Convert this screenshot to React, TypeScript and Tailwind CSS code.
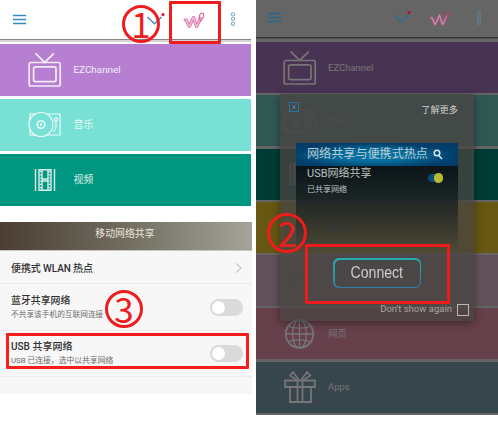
import type { ReactNode } from 'react';

const sans = "font-['Roboto','Noto_Sans_CJK_SC',sans-serif]";

function TvIcon() {
  return (
    <svg width="34" height="36" viewBox="0 0 34 36" fill="none" stroke="currentColor" strokeWidth="1.7" strokeLinejoin="round">
      <rect x="1.2" y="10.5" width="31" height="23.5" rx="1.8" />
      <rect x="5.6" y="14.8" width="22.4" height="14.8" rx="1.8" />
      <path d="M7.5 1.3l9.2 9 9.2-9" />
    </svg>
  );
}

function TurntableIcon() {
  return (
    <svg width="34" height="28" viewBox="0 0 34 28" fill="none" stroke="currentColor" strokeWidth="1.2">
      <path d="M8 3H2v6M2 18v6h6M18 3h14v21H18" />
      <circle cx="13" cy="13.5" r="12" />
      <circle cx="13" cy="13.5" r="3.8" strokeWidth="1.5" />
      <circle cx="13" cy="13.5" r=".6" />
      <path d="M28 10v6.5l-2.5 4.5" />
      <circle cx="28" cy="8.4" r="1.6" />
    </svg>
  );
}

function FilmIcon() {
  return (
    <svg width="22" height="24" viewBox="0 0 22 24" fill="none" stroke="currentColor" strokeWidth="1.4">
      <path d="M1.5 1v22M20.5 1v22M5 1.7h12v20.6H5zM8 2v20M14 2v20M8 11h6M8 13h6" />
      <path d="M6.5 3v18M15.5 3v18" strokeDasharray="1.2 2" />
    </svg>
  );
}

function UsbIcon() {
  return (
    <svg width="32" height="32" viewBox="0 0 32 32" fill="none" stroke="currentColor" strokeWidth="1.2">
      <path d="M22 1h9v9h-9zM20 10h11v21H2V15h18z" />
      <path d="M25 4v3M28 4v3M25 14v12" />
      <circle cx="14" cy="23" r="4" />
    </svg>
  );
}

function FolderIcon() {
  return (
    <svg width="26" height="18" viewBox="0 0 26 18" fill="none" stroke="currentColor">
      <path d="M1 2h20v14H1zM21 5h4v8h-4" />
    </svg>
  );
}

function GlobeIcon() {
  return (
    <svg width="30" height="30" viewBox="0 0 30 30" fill="none" stroke="currentColor" strokeWidth="1.3">
      <circle cx="14.5" cy="15" r="13.8" strokeWidth="1.8" />
      <ellipse cx="14.5" cy="15" rx="7" ry="14" />
      <path d="M14.5 1v28M.5 15h28M3.5 7c5 2.8 17 2.8 22 0M3.5 23c5-2.8 17-2.8 22 0" />
    </svg>
  );
}

function GiftIcon() {
  return (
    <svg width="32" height="32" viewBox="0 0 32 32" fill="none" stroke="currentColor" strokeWidth="1.8">
      <path d="M1.2 9.5h29.6v6.5H1.2zM6 16v15h21V16M13.5 9.5V31M18.5 9.5V31" />
      <path d="M15 9L9 1 6 4.5 13 9M17 9l6-8 3.5 3.5L19 9" strokeWidth="1.5" />
    </svg>
  );
}

function Menu() {
  return (
    <svg width="14" height="12" viewBox="0 0 14 12" stroke="#358bc0" strokeWidth="1.6">
      <path d="M0 1.5h13.2M0 5.5h13.2M0 9.5h13.2" />
    </svg>
  );
}

const squiggle = 'M2.2 9c2-.8 2.4 5 4 6.4C8 13.6 8.6 9 10.6 6.4c1.2 2.6 1.4 7.4 3 9C15.4 13.6 16 10 17.2 7.4';

function HeaderActions() {
  return (
    <div className="flex items-center">
      <svg width="20" height="16" viewBox="0 0 20 16" fill="none">
        <path d="M1.5 5l7 6.8 7-6.8" stroke="#3c91c5" strokeWidth="1.5" />
        <circle cx="17" cy="2.6" r="1.6" fill="#e8133d" />
      </svg>
      <svg className="ml-[17px]" width="23" height="18" viewBox="0 0 23 18" fill="none" strokeLinecap="round" strokeLinejoin="round">
        <path d={squiggle} stroke="#de72aa" strokeWidth="3.1" />
        <path d={squiggle} stroke="#f5cfe2" strokeWidth="1.1" />
        <path d="M16.4 8.4c-.8-3.4.6-6.4 2.8-6.4 2.1.3 2 3.8-.1 6l-2 2.6" stroke="#de5f9f" strokeWidth="1.2" />
      </svg>
      <svg className="ml-[24px]" width="6" height="15" viewBox="0 0 6 15" fill="none" stroke="#78aec9" strokeWidth="1.1">
        <circle cx="3" cy="2.4" r="1.6" />
        <circle cx="3" cy="7.1" r="1.6" />
        <circle cx="3" cy="11.8" r="1.6" />
      </svg>
    </div>
  );
}

function Row({ color, icon, label, size }: { color: string; icon: ReactNode; label?: string; size: string }) {
  return (
    <div className={`flex shrink-0 items-center ${size} ${color}`}>
      <div className="flex w-[34px] shrink-0 justify-center">{icon}</div>
      {label && <span className="ml-[11.5px] leading-none">{label}</span>}
    </div>
  );
}

function Toggle() {
  return (
    <div className="flex h-[17px] w-[33px] shrink-0 items-center rounded-full bg-[#dadada] px-[2px]">
      <div className="size-[13px] rounded-full bg-white" />
    </div>
  );
}

function Badge({ n, place }: { n: string; place: string }) {
  return (
    <div className={`absolute flex items-center justify-center rounded-full border-[3px] border-[#ee1c1c] font-['Noto_Sans_CJK_SC',sans-serif] text-[35px] text-[#ee1c1c] ${place}`}>
      <span className="-mt-[3px] leading-[32px]">{n}</span>
    </div>
  );
}

function LibraryScreen() {
  const size = 'h-[52px] pl-[28px] text-[9.9px] text-white/85';
  return (
    <section className="flex h-[207px] flex-col">
      <header className="flex h-[39px] shrink-0 items-center justify-between pl-[13px] pr-[15px]">
        <Menu />
        <HeaderActions />
      </header>
      <div className="mb-[2px] h-[3px] shrink-0 border-t border-[#858585] bg-[#d6d6d6]" />
      <div className="flex flex-col gap-[3px]">
        <Row size={size} color="bg-[#b67fd2]" icon={<TvIcon />} label="EZChannel" />
        <Row size={size} color="bg-[#78e0d4]" icon={<TurntableIcon />} label="音乐" />
        <Row size={size} color="bg-[#009680]" icon={<FilmIcon />} label="视频" />
      </div>
    </section>
  );
}

function TetheringScreen() {
  return (
    <section className="mt-[15px] h-[172px] w-[252px] bg-[#f7f7f7] text-[#303030]">
      <header className="flex h-[29px] items-center justify-center border-b border-[#c8c9c2] bg-linear-to-r from-[#4b3e35] via-[#716d60] to-[#a5a39a] pr-[2px] pb-[4px] text-[9.9px] text-[#e8e5dc]">
        移动网络共享
      </header>
      <div className="flex h-[33px] items-center justify-between border-b border-[#ececec] pl-[11px] pr-[10px] pt-[2px]">
        <span className="text-[10px] font-medium tracking-[-0.1px]">便携式 WLAN 热点</span>
        <svg width="6" height="10" viewBox="0 0 6 10" fill="none" stroke="#c6c6c6" strokeWidth="1.2"><path d="M.5.5L5 5 .5 9.5" /></svg>
      </div>
      <div className="flex h-[47px] items-center justify-between border-b border-[#ececec] pl-[11px] pr-[9px]">
        <div className="pt-[2px]">
          <div className="text-[9.9px] font-medium leading-[14px]">蓝牙共享网络</div>
          <div className="text-[7.7px] leading-[14px] text-[#6c6c6c]">不共享该手机的互联网连接</div>
        </div>
        <Toggle />
      </div>
      <div className="flex h-[46px] items-center justify-between border-b border-[#ececec] pl-[11px] pr-[9px]">
        <div className="pt-[1px]">
          <div className="text-[10px] font-medium leading-[14px]">USB 共享网络</div>
          <div className="text-[7.8px] leading-[14px] text-[#6c6c6c]">USB 已连接，选中以共享网络</div>
        </div>
        <Toggle />
      </div>
    </section>
  );
}

function TetheringDialog() {
  return (
    <div className="absolute left-[24px] top-[94px] flex h-[227px] w-[194px] flex-col bg-[#484442]/75 shadow-[0_2px_8px_rgba(0,0,0,0.4)]">
      <div className="flex h-[49px] shrink-0 items-start justify-between pl-[9px] pr-[16px] pt-[8px]">
        <div className="flex size-[10px] items-center justify-center border border-[#2476a5]">
          <svg width="4" height="4" viewBox="0 0 4 4" stroke="#2992c8"><path d="M.5.5l3 3M3.5.5l-3 3" /></svg>
        </div>
        <span className="text-[9.2px] leading-[15px] text-[#d0d0d0]">了解更多</span>
      </div>
      <div className="mx-[16px] h-[109px] shrink-0">
        <div className="flex h-[23px] items-center bg-[radial-gradient(ellipse_at_48%_55%,#077aa7_0%,#066d9c_32%,#033f6c_68%,#043966_100%)] pl-[11px] text-[#b9cbd4]">
          <span className="whitespace-nowrap text-[12.1px] leading-none">网络共享与便携式热点</span>
          <svg className="ml-[5px]" width="10" height="11" viewBox="0 0 10 11" fill="none" stroke="#e1e7ea" strokeWidth="1.5">
            <circle cx="4" cy="4" r="2.8" /><path d="M5.5 6.2L9 10" />
          </svg>
        </div>
        <div className="flex h-[86px] items-start justify-between bg-linear-to-b from-[#0b1519] via-[#172020]/70 to-transparent pl-[11px] pr-[15px]">
          <div className="text-[#bfc3c2]">
            <div className="text-[11px] leading-[16px]">USB网络共享</div>
            <div className="text-[8px] leading-[15px]">已共享网络</div>
          </div>
          <div className="mt-[8px] flex h-[8px] w-[15px] items-center justify-end rounded-full bg-[#064b79]">
            <div className="h-[10px] w-[9px] shrink-0 rounded-full bg-[#b9bc31]" />
          </div>
        </div>
      </div>
      <div className="flex h-[47px] items-center pb-[5px] pl-[53px]">
        <button className="h-[30px] w-[88px] rounded-[6px] bg-linear-to-b from-[#24adb0] to-[#307da9] p-[1.5px] font-['Liberation_Sans',sans-serif] text-[#cfcbcc]">
          <span className="flex h-full items-center justify-center rounded-[5px] bg-[#4c4747]">
            <span className="scale-x-88 text-[16px] leading-none">Connect</span>
          </span>
        </button>
      </div>
      <label className="flex h-[22px] items-center justify-end pb-[1px] pr-[5px] text-[9.5px] text-[#aaa4a2]">
        <span className="whitespace-nowrap">Don't show again</span>
        <span className="ml-[5px] size-[12px] border-[1.5px] border-[#bcb6b5]" />
      </label>
    </div>
  );
}

function GuideScreen() {
  const size = 'h-[51px] pl-[26.5px] text-[9.5px] text-[#777577]';
  const dim = 'h-[51px] pl-[26.5px] text-[9.5px] text-[#6f6367]';
  const dark = 'h-[51px] pl-[26.5px] text-[9.5px] text-[#454352]';
  return (
    <section className="relative ml-auto h-[415px] w-[242px] bg-[#656565]">
      <header className="flex h-[37px] items-center justify-between pl-[12px] pr-[16px] pb-[1px] brightness-75">
        <Menu />
        <HeaderActions />
      </header>
      <div className="mb-[3px] h-[2px] border-t border-[#303030] bg-[#515151]" />
      <div className="flex flex-col gap-[2.25px]">
        <Row size={size} color="bg-[#493353]" icon={<TvIcon />} label="EZChannel" />
        <Row size={dim} color="bg-[#305853]" icon={<TurntableIcon />} label="音乐" />
        <Row size={dim} color="bg-[#003c33]" icon={<FilmIcon />} />
        <Row size={dark} color="bg-[#665812]" icon={<UsbIcon />} label="图片" />
        <Row size={dark} color="bg-[#62515a]" icon={<FolderIcon />} />
        <Row size={size} color="bg-[#66404b]" icon={<GlobeIcon />} label="网页" />
        <Row size={size} color="bg-[#37454d]" icon={<GiftIcon />} label="Apps" />
      </div>
      <TetheringDialog />
    </section>
  );
}

export default function App() {
  return (
    <main className={`relative flex h-[429px] w-[498px] overflow-hidden bg-white ${sans}`}>
      <div className="w-[251px]">
        <LibraryScreen />
        <TetheringScreen />
      </div>
      <GuideScreen />
      <Badge n="1" place="left-[122px] top-[5px] size-[38px]" />
      <Badge n="2" place="left-[267px] top-[213px] size-[40px]" />
      <Badge n="3" place="left-[105px] top-[290px] size-[38px]" />
      <div className="absolute left-[169px] top-[1px] h-[43px] w-[52px] rounded-[1px] border-[3px] border-[#ee1c1c]" />
      <div className="absolute left-[6px] top-[333px] h-[36px] w-[243px] rounded-[1px] border-[3px] border-[#fa1d1d]" />
      <div className="absolute left-[305px] top-[244px] h-[60px] w-[145px] rounded-[1px] border-[3px] border-[#ee1c1c]" />
    </main>
  );
}
